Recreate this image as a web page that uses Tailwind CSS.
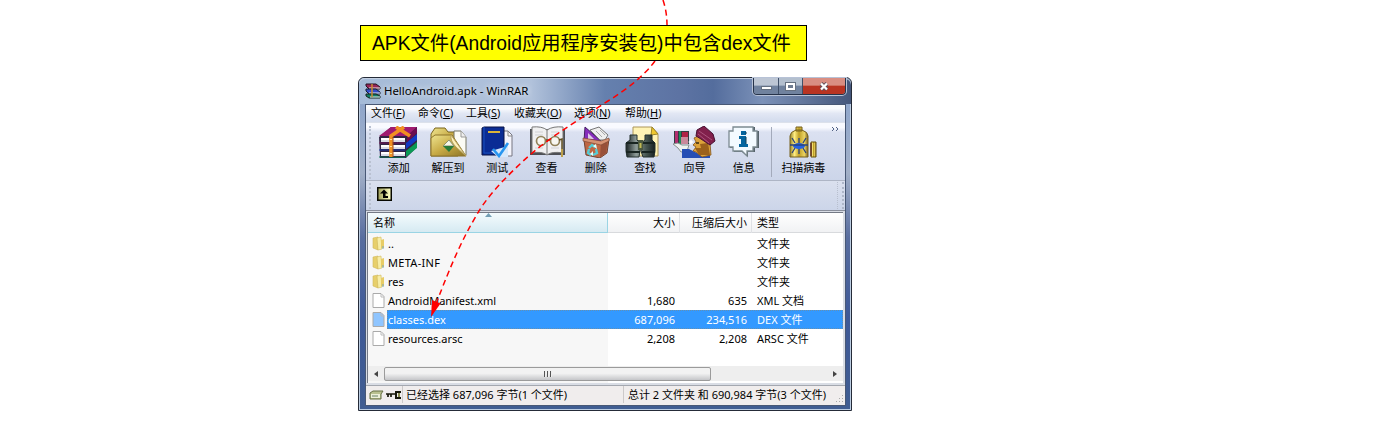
<!DOCTYPE html>
<html lang="zh-CN">
<head>
<meta charset="utf-8">
<title>HelloAndroid.apk - WinRAR</title>
<script src="https://cdn.jsdelivr.net/npm/@tailwindcss/browser@4"></script>
</head>
<body class="relative h-[428px] w-[1376px] overflow-hidden bg-white font-['Noto_Sans','Noto_Sans_CJK_SC',sans-serif] text-[11px] leading-none text-black">
<div class="relative ml-[360px] pt-[25px]">
  <div class="relative z-30 flex h-9 w-[447px] items-center border border-black bg-[#ffff00] pt-[2px] pl-[11px] font-['Liberation_Sans','Noto_Sans_CJK_SC',sans-serif] text-[19.3px] whitespace-nowrap"><span>APK文件(Android应用程序安装包)中包含dex文件</span></div>
</div>

<div class="mt-4 ml-[358px] flex h-[334px] w-[494px] flex-col rounded-t-md border border-[#252b38] bg-[linear-gradient(180deg,#8aa4cb_0,#91a7cb_30px,#a1afc7_95px,#586d9f_160px,#3e5998_240px,#405d91_100%)] shadow-[inset_0_0_0_1px_#bccde2]">
  <header class="flex h-[26px] shrink-0 justify-between rounded-t-md bg-[linear-gradient(90deg,#a5bbd8_0,#b1c2db_35%,#6580ae_50%,#5d73a3_65%,#546d9d_72%,#7b91b8_82%,#45577b_100%)] shadow-[inset_0_1px_0_#c4d1e3]">
    <div class="flex items-center pl-[6px]">
      <svg class="-mt-px h-4 w-4" viewBox="0 0 16 16"><path d="M1 1h10l4 3v2H4L1 3z" fill="#962557" stroke="#251322"/><path d="M4 5h11" stroke="#eee"/><path d="M1 6h10l4 3v2H4L1 8z" fill="#334dcb" stroke="#18202f"/><path d="M4 10h11" stroke="#eee"/><path d="M1 11h10l4 2v2H4l-3-2z" fill="#117d65" stroke="#17241e"/><path d="M5 14h10" stroke="#eee"/><path d="M7 1v13" stroke="#c98d33" stroke-width="1.5"/></svg>
      <span class="-mt-px ml-[3px] text-[11.4px] whitespace-nowrap [text-shadow:0_0_6px_#fff]">HelloAndroid.apk - WinRAR</span>
    </div>
    <div class="mr-[5px] flex h-[17px] overflow-hidden rounded-b border border-t-0 border-[#26334a] bg-[#8999b1] shadow-[0_0_0_1px_#b7c2d6]">
      <div class="flex w-[25px] items-end justify-center border-r border-[#405069] bg-linear-to-b from-[#bdc6d4] from-45% to-[#70829e] to-50% pb-1"><i class="block h-1 w-[11px] border border-[#667181] bg-white"></i></div>
      <div class="flex w-6 items-center justify-center border-r border-[#405069] bg-linear-to-b from-[#b3bfce] from-45% to-[#70829e] to-50%"><i class="block h-[7px] w-[9px] border-2 border-white bg-[#6f7c90] outline outline-[#667181]"></i></div>
      <div class="flex w-[42px] items-center justify-center bg-linear-to-b from-[#d98e82] from-45% to-[#b93422] to-50%"><svg class="h-[9px] w-[10px]" viewBox="0 0 10 9"><path d="M2 1.5 8 7.5M8 1.5 2 7.5" stroke="#63505b" stroke-width="4"/><path d="M2 1.5 8 7.5M8 1.5 2 7.5" stroke="#fff" stroke-width="2.3"/></svg></div>
    </div>
  </header>

  <main class="ml-[6px] flex w-[481px] flex-col border border-[#485875] bg-[#d4dced]">
    <nav class="flex h-[17px] items-center bg-linear-to-b from-[#fafbfd] from-20% via-[#e2e7f4] to-[#d2dbed] pl-[5px] text-[10.9px] whitespace-nowrap">
      <span class="w-[47px]">文件(<u>F</u>)</span><span class="w-[48px]">命令(<u>C</u>)</span><span class="w-[48px]">工具(<u>S</u>)</span><span class="w-[60px]">收藏夹(<u>O</u>)</span><span class="w-[51px]">选项(<u>N</u>)</span><span>帮助(<u>H</u>)</span>
    </nav>
    <section class="flex h-[59px] border-t border-b border-t-[#dce1eb] border-b-[#aeb5c5] bg-linear-to-b from-[#f9faff] from-8% via-[#dbe1f1] via-16% to-[#ccd5e9]">
      <i class="mt-[3px] ml-[3px] h-[53px] w-[3px] border-l-2 border-dotted border-[#b9c1d1]"></i>
      <div class="ml-[2px] flex gap-0 whitespace-nowrap">
        <div class="flex w-[49.3px] flex-col items-center pt-[3px]">
          <svg class="mr-[2px] h-8 w-10" viewBox="0 0 40 32"><path d="m1 11 12-10h26v20L28 32H2z" fill="#332544"/><path d="m28 17 11-9v6l-11 9z" fill="#1238c4"/><path d="m28 25 11-9v6l-11 9z" fill="#0a9a55"/><path d="M1 10 13 1h26l-10 9z" fill="#a01b70"/><path d="m29 10 10-9v6l-10 9z" fill="#6c0c50"/><path d="M3 12h24v4H3zM3 19h24v4H3zM3 26h24v4H3z" fill="#fff"/><path d="M3 15h24M3 22h24M3 29h24" stroke="#b5bbcf"/><path d="M1 17h26" stroke="#74175a"/><path d="M1 24h26" stroke="#173ba5"/><path d="m1 31 26 .4" stroke="#08724e"/><path d="m18 1 14 9M26 1 13 10v21" fill="none" stroke="#f19021" stroke-width="3.6"/><path d="M15 11v20" stroke="#a44c18"/><path d="M13 13v1M13 20v1M13 27v1" stroke="#ffe194" stroke-width="2"/></svg>
          <span class="mt-[4px]">添加</span></div>
        <div class="flex w-[49.3px] flex-col items-center pt-[3px]">
          <svg class="ml-[2px] h-8 w-[37px]" viewBox="0 0 37 32"><defs><linearGradient id="foldergold" x2="1" y2="1"><stop stop-color="#eee48f"/><stop offset=".5" stop-color="#c7aa45"/><stop offset="1" stop-color="#8c7427"/></linearGradient></defs><path d="m1 8 4-6h10l3 4h10v24H1z" fill="url(#foldergold)" stroke="#79641c"/><path d="M24 5h7l5 6v18H24z" fill="#fbfbf4" stroke="#777665"/><path d="m31 5v6h5" fill="#eee" stroke="#999"/><path d="m1 12 4-3h17l14 21H1z" fill="url(#foldergold)" stroke="#8e752a"/><path d="m21 9 15 21-10-9q-6-6-5-12" fill="#fff0ba" stroke="#b3a05e"/><path d="m13 20 6-6 5 6z" fill="#f4f6e7" stroke="#8d9270"/><path d="m13 20 6 6 5-6z" fill="#287b38"/></svg>
          <span class="mt-[4px]">解压到</span></div>
        <div class="flex w-[49.3px] flex-col items-center pt-[3px]">
          <svg class="h-8 w-8" viewBox="0 0 32 32"><path d="M22 5h5l4 4v21H17V9z" fill="#f4f4fc" stroke="#777781"/><path d="M27 5v5h4" fill="none" stroke="#888"/><path d="M1 2 3 1h20v28H1z" fill="#0a2c95" stroke="#081345"/><path d="M3 1v26h18" stroke="#1951bd" fill="none"/><path d="M7 6h12" stroke="#d9b33a" stroke-width="2"/><path d="m10 25 7 6h10V20z" fill="#d7e8fb"/><path d="m12 23 6 7 9-13" stroke="#2896f0" stroke-width="2.6" fill="none"/></svg>
          <span class="mt-[4px]">测试</span></div>
        <div class="flex w-[49.3px] flex-col items-center pt-[3px]">
          <svg class="ml-px h-8 w-[37px]" viewBox="0 0 37 32"><path d="M1 3h35v26H1z" fill="#4e5055"/><path d="M3 1q10-1 15 3 6-4 16-3v26q-11-2-16 2-5-4-15-2z" fill="#f0f0f1" stroke="#777"/><path d="M18 4v24" stroke="#777"/><path d="M6 6h8M6 9h8M22 6h8M22 9h8M6 22h8M22 22h8" stroke="#d0d1d4"/><circle cx="12" cy="15" r="4.5" fill="#f7f7f1" stroke="#91825a" stroke-width="1.7"/><circle cx="26" cy="15" r="4.5" fill="#f7f7f1" stroke="#91825a" stroke-width="1.7"/><path d="M17 14h4M30 14l3-1v14" stroke="#615020" fill="none" stroke-width="1.5"/><path d="M33 23v8" stroke="#bda04a" stroke-width="2"/></svg>
          <span class="mt-[4px]">查看</span></div>
        <div class="flex w-[49.3px] flex-col items-center pt-[3px]">
          <svg class="ml-px h-8 w-7" viewBox="0 0 28 32"><path d="m3 1 16 14H2z" fill="#862dbc" stroke="#452062"/><path d="m6 7 6 6H6z" fill="#ddc8e7"/><path d="m8 4 9-3 9 8-3 5h-5z" fill="#eee" stroke="#777"/><path d="m14 5 6 6M18 4l5 5" stroke="#aaa"/><path d="m2 14 17 3 8-4-2 14-7 5-14-3z" fill="#bf6744" stroke="#724332"/><path d="m19 17 7-3-2 13-6 4z" fill="#985039"/><path d="m1 12 18 3 8-3v3l-8 4-18-4z" fill="#d79273" stroke="#75412d" stroke-width=".6"/><path d="m7 22 3-3 3 2M14 23l1 4-4 2M9 29l-3-2 1-4" stroke="#54ccd5" stroke-width="2.4" fill="none"/><path d="m11 20 4 3-1-5zM11 30v-5l-3 3z" fill="#e1ffff"/></svg>
          <span class="mt-[4px]">删除</span></div>
        <div class="flex w-[49.3px] flex-col items-center pt-[3px]">
          <svg class="mr-[7px] h-8 w-[34px]" viewBox="0 0 34 32"><defs><linearGradient id="barrel"><stop stop-color="#1a2324"/><stop offset=".35" stop-color="#8e9b98"/><stop offset=".7" stop-color="#465550"/><stop offset="1" stop-color="#172020"/></linearGradient></defs><path d="M8 1h19l6 7v22H8z" fill="#fff3b5" stroke="#ac965b"/><path d="m27 1-1 8 7-1z" fill="#efc72f" stroke="#9b842a"/><path d="M5 9h7v5l3 3v8l-1 6H2l-1-6v-8l4-3zM20 9h7v5l3 3v8l-1 6H18l-2-6v-8l4-3z" fill="url(#barrel)" stroke="#24302e"/><path d="M1 17h13M17 17h13M1 26h14M17 26h13" stroke="#182421" stroke-width="2"/><path d="M13 14h5v10h-5z" fill="#4b583f"/><path d="M15.5 17v5" stroke="#c1b955" stroke-width="2"/></svg>
          <span class="mt-[4px]">查找</span></div>
        <div class="flex w-[49.3px] flex-col items-center pt-[3px]">
          <svg class="h-8 w-11" viewBox="0 0 44 32"><path d="M2 5h15v13H2z" fill="#313e42"/><path d="M3 5h3v13H3z" fill="#b22e70"/><path d="M7 5h2v13H7z" fill="#218a59"/><path d="M10 6h6v5h-6z" fill="#b02145"/><path d="M9 11h7v7H9z" fill="#c9889b"/><path d="m1 18 5-1 4 2h7l-2 6-6 1-3-4z" fill="#edf1ef" stroke="#88908f"/><path d="M10 23h7l10 5 11 1v3H10z" fill="#254eb4"/><path d="m22 12 6-3 10 8 1 12-9 2-6-5-3-1 3-4-3-2 3-3z" fill="#dda33b" stroke="#80521b" stroke-width=".8"/><path d="m28 18 8-1 2 12H27l-4-7h6z" fill="#9b611b"/><path d="m24 10 1-6 7-4 9 8 2 7-5 4-9-6z" fill="#81204c" stroke="#461132"/><path d="m27 5 13 9M26 8l11 9" stroke="#ac547c"/><path d="m18 15 1-2 1 2 2 1-2 1-1 2-1-2-2-1z" fill="#fff"/><path d="M24 17h3" stroke="#392a15" stroke-width="1.5"/></svg>
          <span class="mt-[4px]">向导</span></div>
        <div class="flex w-[49.3px] flex-col items-center pt-[3px]">
          <svg class="h-8 w-8" viewBox="0 0 32 32"><path d="M6 1h21v4h4v17h-4v4h-7v5l-6-5H6v-4H2V6h4z" fill="#56636b"/><path d="M5 1h20v4h4v16h-4v4h-6v5l-5-5H5v-4H1V5h4z" fill="#f3faff" stroke="#7c8a91" stroke-width="1.3"/><path d="M13 5h5v4h-5zM12 10h6v8h2v3h-9v-3h2v-5h-2v-3z" fill="#06659e"/><path d="M18 6v2M18 11v7" stroke="#164155"/></svg>
          <span class="mt-[4px]">信息</span></div>
      </div>
      <i class="mt-1 ml-[3px] h-[50px] w-px bg-[#a3aabb]"></i>
      <div class="flex w-[62px] flex-col items-center pt-[3px] whitespace-nowrap">
        <svg class="h-8 w-7" viewBox="0 0 28 32"><defs><linearGradient id="brass"><stop stop-color="#94832c"/><stop offset=".25" stop-color="#ffed81"/><stop offset=".5" stop-color="#bf9f25"/><stop offset=".8" stop-color="#ecd462"/><stop offset="1" stop-color="#796021"/></linearGradient></defs><path d="M7 1h6v4H7zM1 10q0-4 6-6h6q6 2 6 6v21H1z" fill="url(#brass)" stroke="#77611d"/><path d="M22 16h5v15h-5z" fill="url(#brass)" stroke="#66510b"/><path d="M22 17v13" stroke="#693420" stroke-width="1.5"/><ellipse cx="10" cy="20" rx="6" ry="3" fill="#2361e2"/><path d="M3 12l3 5M10 12v5M17 12l-3 5M1 19h18M3 27l3-5M10 23v5M17 27l-3-5" stroke="#29437f" stroke-width="1.3"/></svg>
        <span class="mt-[4px]">扫描病毒</span></div>
      <svg class="mt-[3px] -ml-[3px] h-[6px] w-2" viewBox="0 0 8 6"><path d="m1 1 2 2-2 2M5 1l2 2-2 2" stroke="#536487" fill="none"/></svg>
    </section>
    <section class="flex h-[29px] items-start justify-between bg-linear-to-b from-[#dae0ee] to-[#ccd5e9]">
      <div class="flex"><i class="mt-[2px] ml-[3px] h-[26px] w-[3px] border-l-2 border-dotted border-[#b9c1d1]"></i><svg class="mt-[6px] ml-[5px] h-[14px] w-[15px]" viewBox="0 0 15 14"><defs><linearGradient id="upbox"><stop stop-color="#a2a25e"/><stop offset="1" stop-color="#ffffc2"/></linearGradient></defs><path d="M0 0h15v14H0z" fill="#070800"/><path d="M1.5 1.5h12v11h-12z" fill="url(#upbox)"/><path d="m7 2.5 4 4H8.5V9H11v2H6V6.500H3z" fill="#000"/></svg></div>
      <i class="mt-px mr-[1px] h-[27px] w-[7px] border-r-2 border-l border-dotted border-r-[#aeb7c9] border-l-[#b8bfce]"></i>
    </section>
    <section class="h-[175px] border-t border-[#8a8f9c] bg-[#d9dde5] pt-px pr-[2px] pb-[2px] pl-px">
      <div class="flex h-[171px] flex-col border-t border-l border-[#747985] bg-[linear-gradient(90deg,#f7f7f7_240px,#fff_240px)]">
        <div class="flex h-5 shrink-0 items-center border-b border-[#d8dadd] bg-linear-to-b from-white to-[#f1f2f4] whitespace-nowrap">
          <div class="relative flex h-5 w-60 items-center border-r border-b border-[#9ad4e4] bg-linear-to-b from-[#f4fbfd] to-[#d6eaf2] pl-[5px]">名称<svg class="absolute top-0 left-[117px] h-[4px] w-[7px]" viewBox="0 0 7 4"><path d="m0 4 3.500-4L7 4z" fill="#729eb4"/></svg></div>
          <div class="flex h-5 w-[72px] items-center justify-end border-r border-[#dfe1e5] pr-1">大小</div><div class="flex h-5 w-[72px] items-center justify-end border-r border-[#dfe1e5] pr-1">压缩后大小</div><span class="pl-[5px]">类型</span>
        </div>
        <div class="flex h-[133px] flex-col pt-px" id="files"></div>
        <div class="flex h-[15px] items-center bg-[#eee]"><div class="flex w-[16px] justify-center"><svg class="h-[6px] w-1" viewBox="0 0 4 6"><path d="M4 0v6L0 3z" fill="#444"/></svg></div><div class="flex h-[14px] w-[327px] items-center justify-center gap-px rounded-xs border border-[#9b9b9b] bg-linear-to-b from-[#f2f2f2] from-45% to-[#c5c6c9]"><i class="h-[6px] w-[2px] border-l border-[#555] bg-[#eee]"></i><i class="h-[6px] w-[2px] border-l border-[#555] bg-[#eee]"></i><i class="h-[6px] w-[2px] border-l border-[#555] bg-[#eee]"></i></div><svg class="ml-[122px] h-[6px] w-1" viewBox="0 0 4 6"><path d="M0 0v6l4-3z" fill="#444"/></svg></div>
      </div>
    </section>
    <footer class="flex h-[20px] items-start border-t border-[#a4a8b0] bg-[#f0eded] whitespace-nowrap">
      <svg class="mt-[4px] ml-[3px] h-[10px] w-[33px]" viewBox="0 0 33 10"><path d="m1 3 3-2h10l-2 3v5H1z" fill="#b9c190" stroke="#667044"/><path d="M2 4h9v4H2z" fill="#edf0d9"/><path d="M3 6h6" stroke="#668066"/><path d="M17 4h10M19 4v3M22 4v3" stroke="#17170b" stroke-width="1.7"/><path d="M32 2h-5v6h5" stroke="#17170b" stroke-width="2" fill="none"/><path d="M30 3v4" stroke="#898b51" stroke-width="2"/></svg>
      <span class="h-[17px] w-[221px] border-l border-[#ccc9c9] pl-[3px] leading-[17px]">已经选择 687,096 字节(1 个文件)</span><span class="h-[17px] border-l border-[#ccc9c9] pl-[4px] leading-[17px]">总计 2 文件夹 和 690,984 字节(3 个文件)</span>
      <svg class="mt-[9px] ml-auto h-[9px] w-[9px]" viewBox="0 0 9 9" fill="#aaa"><path d="M6 0h1v1H6zM3 3h1v1H3zM6 3h1v1H6zM0 6h1v1H0zM3 6h1v1H3zM6 6h1v1H6z"/></svg>
    </footer>
  </main>
</div>

<svg class="pointer-events-none absolute top-0 left-0 z-20 h-[428px] w-[1376px]" viewBox="0 0 1376 428" fill="none"><path d="M663 0Q667 12 667 25M655 61C644 76 626 90 608 101C572 124 545 140 520 164C502 181 486 198 476 216C462 240 452 262 436 304" stroke="#f00" stroke-width="1.5" stroke-dasharray="6 4"/><path d="m432 300 8.500 3.500L431 317z" fill="#f00"/></svg>

<template id="folder"><svg class="h-[15px] w-[13px]" viewBox="0 0 13 15"><path d="m1 2 5-1v13l-5-2z" fill="#e7cf6b" stroke="#d2b95c" stroke-width=".6"/><path d="m5 2 4-1 1 12-4 1z" fill="#f7eda6" stroke="#d0b95d" stroke-width=".6"/><path d="m9 4 3-1v9H9z" fill="#e7cc66"/><path d="M11 10v3" stroke="#7ba8ba"/></svg></template>
<template id="doc"><svg class="h-[15px] w-[13px]" viewBox="0 0 13 15"><path d="M1 .5h8l3 3v11H1z" fill="currentColor" stroke="#aaa"/><path d="M9 1v3h3" stroke="#bbb" fill="none"/></svg></template>
<script>
const rows=[["..","","","文件夹",0],["META-INF","","","文件夹",0],["res","","","文件夹",0],["AndroidManifest.xml","1,680","635","XML 文档",1],["classes.dex","687,096","234,516","DEX 文件",1],["resources.arsc","2,208","2,208","ARSC 文件",1]];
document.getElementById("files").innerHTML=rows.map((r,i)=>{const s=i===4;return `<div class="flex h-[19px] shrink-0 items-center whitespace-nowrap"><span class="flex w-[19px] pl-[4px] ${s?"text-[#8fc5ff]":"text-white"}">${document.getElementById(r[4]?"doc":"folder").innerHTML}</span><div class="flex h-[19px] grow items-center pb-px ${s?"border border-dotted border-[#668fae] bg-[#3399ff] text-white":"border border-transparent"}"><span class="w-[220px] ${i===1?"tracking-[.3px]":""}">${r[0]}</span><span class="w-[67px] text-right">${r[1]}</span><span class="w-[72px] text-right">${r[2]}</span><span class="pl-[10px]">${r[3]}</span></div></div>`}).join("");
</script>
</body>
</html>
